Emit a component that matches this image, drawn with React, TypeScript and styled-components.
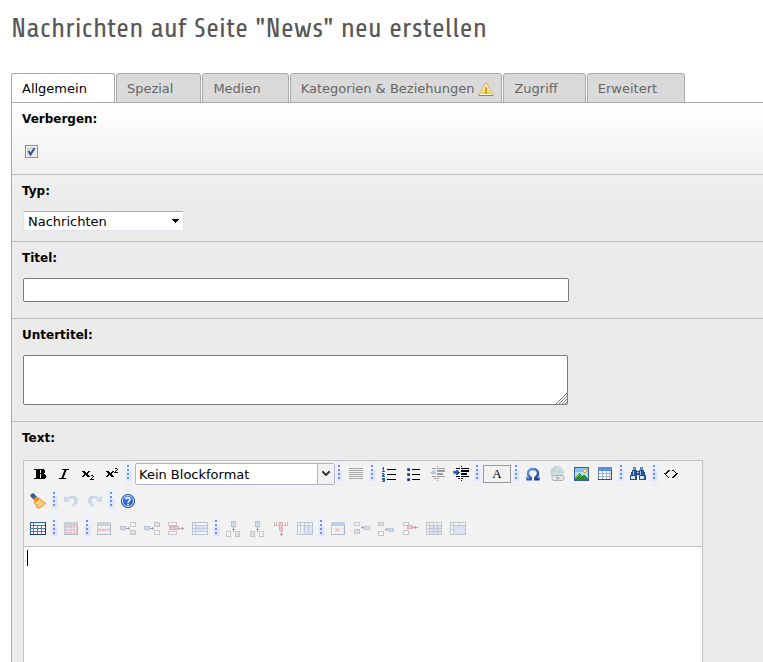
import React from "react";
import styled, { createGlobalStyle, css } from "styled-components";

const GlobalStyle = createGlobalStyle`
  *, *::before, *::after { box-sizing: border-box; }
  body {
    margin: 0;
    background: #fff;
    color: #000;
    font: 13px/16px Verdana, "DejaVu Sans", sans-serif;
  }
`;

/* ---------- page ---------- */

const Page = styled.main`
  display: flex;
  flex-direction: column;
  min-height: 100vh;
  padding: 12px 0 0 11px;
  overflow: hidden;
`;

const Title = styled.h1`
  margin: 0 0 29px;
  color: #585858;
  font: 400 28px/32px Share, "Liberation Sans Narrow", "Roboto Condensed", sans-serif;
  white-space: nowrap;
`;

const TabList = styled.div`
  display: flex;
  gap: 1px;
  margin-bottom: -1px;
`;

const Tab = styled.button<{ $active?: boolean }>`
  display: flex;
  align-items: center;
  gap: 4px;
  height: 30px;
  padding: 2px 7px 0 10px;
  border: 1px solid #a9a9a9;
  border-radius: 3px 3px 0 0;
  background: #dadada;
  color: #666;
  font: inherit;
  white-space: nowrap;
  ${(p) =>
    p.$active &&
    css`
      border-bottom-color: #fff;
      background: #fff;
      color: #000;
    `}
`;

const TabIcon = styled.span`
  display: flex;
  width: 16px;
  height: 16px;
`;

const Panel = styled.div`
  display: flex;
  flex: 1;
  flex-direction: column;
  border-left: 1px solid #a9a9a9;
  background: #ebebeb linear-gradient(#fff, #ebebeb) 0 0 / 100% 100px no-repeat;
`;

const Field = styled.div<{ $grow?: boolean }>`
  display: flex;
  flex-direction: column;
  align-items: flex-start;
  gap: 12px;
  padding: 8px 16px 16px 11px;
  border-top: 1px solid #bcbcbc;
  ${(p) =>
    p.$grow &&
    css`
      flex: 1;
      gap: 14px;
      padding-bottom: 0;
    `}
`;

const SelectField = styled(Field)`
  padding-bottom: 10px;
`;

const CheckField = styled(Field)`
  gap: 18px;
  border-top-color: #a9a9a9;
`;

const Label = styled.label`
  margin-left: -1px;
  font-size: 12px;
  font-weight: 700;
`;

const CheckWrap = styled.span`
  display: grid;
  margin-left: 2px;
  > * {
    grid-area: 1 / 1;
  }
  svg {
    z-index: 1;
    pointer-events: none;
  }
`;

const Checkbox = styled.input`
  appearance: none;
  width: 13px;
  height: 13px;
  margin: 0;
  border: 1px solid #8e8f8f;
  background: linear-gradient(135deg, #cbd0d8, #f6f6f6);
  box-shadow: inset 0 0 0 1px #f4f4f4;
`;

const SelectWrap = styled.span`
  display: grid;
  align-items: center;
  width: 161px;
  > * {
    grid-area: 1 / 1;
  }
  svg {
    justify-self: end;
    margin-right: 4px;
    pointer-events: none;
  }
`;

const Select = styled.select`
  appearance: none;
  width: 100%;
  height: 20px;
  padding: 2px 4px 0;
  border: 1px solid #e2e3ea;
  border-top-color: #abadb3;
  border-radius: 2px;
  background: #fff;
  color: #000;
  font: inherit;
`;

const TextInput = styled.input`
  width: 100%;
  max-width: 546px;
  height: 24px;
  padding: 2px 4px;
  border: 1px solid #7c7c7c;
  border-radius: 2px;
  background: #fff;
  font: inherit;
`;

const AreaWrap = styled.span`
  display: grid;
  width: 100%;
  max-width: 545px;
  > * {
    grid-area: 1 / 1;
  }
  svg {
    place-self: end;
    margin: 1px;
    pointer-events: none;
  }
`;

const TextArea = styled.textarea`
  width: 100%;
  height: 50px;
  padding: 2px 4px;
  border: 1px solid #7c7c7c;
  border-radius: 2px;
  background: #fff;
  font: inherit;
  resize: none;
`;

/* ---------- rich text editor ---------- */

const Editor = styled.div`
  display: flex;
  flex: 1;
  flex-direction: column;
  width: 100%;
  max-width: 680px;
  border: 1px solid #c3c3c3;
  border-bottom: 0;
`;

const Toolbar = styled.div`
  display: flex;
  flex-direction: column;
  padding: 0 2px 3px;
  border-bottom: 1px solid #c3c3c3;
  background: #f2f2f2;
`;

const ToolRow = styled.div<{ $indent?: boolean }>`
  display: flex;
  align-items: center;
  height: ${(p) => (p.$indent ? 26 : 28)}px;
  padding-left: ${(p) => (p.$indent ? 2 : 0)}px;
`;

const Tool = styled.button<{ $off?: boolean }>`
  display: flex;
  flex: none;
  align-items: center;
  justify-content: center;
  width: 24px;
  height: 24px;
  padding: 0;
  border: 0;
  background: none;
  opacity: ${(p) => (p.$off ? 0.35 : 1)};
`;

const ColorTool = styled.button`
  flex: none;
  width: 28px;
  height: 18px;
  margin: 0 1px;
  padding: 0;
  border: 1px solid #9a9a9a;
  background: #f2f2f2;
  color: #000;
  font: 13px/16px "Liberation Serif", serif;
`;

const Separator = styled.span`
  display: flex;
  flex: none;
  justify-content: center;
  width: 9px;
`;

const FormatWrap = styled.span`
  display: grid;
  flex: none;
  width: 200px;
  margin: 0 0 0 2px;
  > * {
    grid-area: 1 / 1;
  }
  svg {
    place-self: center end;
    pointer-events: none;
  }
`;

const FormatSelect = styled.select`
  appearance: none;
  width: 100%;
  height: 22px;
  padding: 1px 3px 0;
  border: 1px solid #b4b4c4;
  border-radius: 2px;
  background: #fff;
  color: #000;
  font: inherit;
`;

const Canvas = styled.div`
  display: grid;
  flex: 1;
  min-height: 115px;
  background: #fff;
  > * {
    grid-area: 1 / 1;
  }
`;

const CanvasText = styled.textarea`
  width: 100%;
  height: 100%;
  padding: 3px 4px;
  border: 0;
  outline: 0;
  background: none;
  font: inherit;
  resize: none;
`;

const Caret = styled.span`
  width: 1px;
  height: 16px;
  margin: 3px;
  background: #000;
  pointer-events: none;
`;

/* ---------- icons ---------- */

const Svg = ({ children, w = 16, h = 16, smooth = false }: { children: React.ReactNode; w?: number; h?: number; smooth?: boolean }) => (
  <svg width={w} height={h} viewBox={`0 0 ${w} ${h}`} fill="none" shapeRendering={smooth ? "auto" : "crispEdges"} aria-hidden="true">
    {children}
  </svg>
);

const Sep = () => (
  <Separator>
    <Svg w={7} h={24}>
      <rect x=".5" y=".5" width="6" height="23" stroke="#ebeefa" />
      <rect x="1" y="1" width="5" height="8" fill="#eef2fd" />
      <rect x="1" y="9" width="5" height="10" fill="#dce5fc" />
      <path d="M2 3h2v2H2zM2 7h2v2H2zM2 11h2v2H2zM2 15h2v2H2z" fill="#6c8fea" />
    </Svg>
  </Separator>
);

const Warning = () => (
  <Svg smooth>
    <defs>
      <linearGradient id="warn" x1="0" y1="0" x2="0" y2="1">
        <stop offset="0" stopColor="#fdf3a0" />
        <stop offset="1" stopColor="#f3c83c" />
      </linearGradient>
    </defs>
    <path d="M8 1.500 15.300 14.400H.7z" fill="#fff" stroke="#e3a53a" strokeLinejoin="round" />
    <path d="M1 14.500h14" stroke="#c9771c" />
    <path d="M8 4 13.300 13H2.700z" fill="url(#warn)" />
    <path d="M7.200 6.200h1.600l-.3 3.800h-1zM7.200 10.800h1.600v1.400H7.200z" fill="#a87b12" />
  </Svg>
);

const Bold = () => (
  <Svg>
    <path d="M2 3h10v1h1v3h-1v1h1v1h1v3h-1v1H2v-1h2V4H2z" fill="#000" />
    <path d="M8 4h1v3H8zM8 8h1v4H8z" fill="#f2f2f2" />
  </Svg>
);
const Italic = () => (
  <Svg smooth>
    <path d="M6 3.500h7M3 12.500h7" stroke="#000" />
    <path d="M9.700 3.500 6.300 12.500" stroke="#000" strokeWidth="2" />
  </Svg>
);
const Sub = () => (
  <Svg>
    <path d="M2 5h3v1h1v1h1V6h1V5h2v1H9v1H8v2h1v1h1v1H7v-1H6V9H5v1H4v1H2v-1h1V9h1V7H3V6H2z" fill="#000" />
    <path d="M11 9h2v1h1v1h-1v1h-1v1h2v1h-4v-1h1v-1h1v-1h1v-1h-2z" fill="#000" />
  </Svg>
);
const Sup = () => (
  <Svg>
    <path d="M2 5h3v1h1v1h1V6h1V5h2v1H9v1H8v2h1v1h1v1H7v-1H6V9H5v1H4v1H2v-1h1V9h1V7H3V6H2z" fill="#000" />
    <path d="M11 2h2v1h1v1h-1v1h-1v1h2v1h-4V6h1V5h1V4h1V3h-2z" fill="#000" />
  </Svg>
);
const Align = () => (
  <Svg>
    <path d="M1 2.500h14M1 4.500h14M1 6.500h14M1 8.500h14M1 10.500h14M1 12.500h14" stroke="#222" />
  </Svg>
);
const Ordered = () => (
  <Svg>
    <path d="M6 3.500h9M6 8.500h9M6 13.500h9" stroke="#000" />
    <path d="M2 1h1v4H2V3H1V2h1zM1 5h3v1H1zM1 7h2v1h1v1H3v1H2v1H1V9h1V8H1zM2 10h2v1H2zM1 12h3v4H1v-1h1v-1H1z" fill="#2f62b5" />
  </Svg>
);
const Unordered = () => (
  <Svg>
    <path d="M7 3.500h8M7 8.500h8M7 13.500h8" stroke="#000" />
    <path d="M2 2h3v3H2zM2 7h3v3H2zM2 12h3v3H2z" fill="#3f73c4" />
    <path d="M3 3h2v2H3zM3 8h2v2H3zM3 13h2v2H3z" fill="#1f3f7c" />
  </Svg>
);
const IndentLines = () => (
  <path d="M8 0h1v1H8zM3 2h4v1H3zM8 2h8v1H8zM8 4h8v2H8zM8 7h6v2H8zM3 10h4v1H3zM8 10h8v1H8zM5 12h2v1H5zM8 12h2v1H8zM8 14h1v1H8z" fill="#000" />
);
const Outdent = () => (
  <Svg>
    <IndentLines />
    <path d="M1 6h2V5h1V4h2v2h1v2H5v1H4V8H2V7H1z" fill="#4a7fce" />
  </Svg>
);
const Indent = () => (
  <Svg>
    <IndentLines />
    <path d="M0 5h3V4h2v1h1v1h1v1H6v1H5v1H3V8H1V7H0z" fill="#2f66c8" />
    <path d="M4 6h2v2H4z" fill="#173a80" />
  </Svg>
);
const Omega = () => (
  <Svg smooth>
    <defs>
      <linearGradient id="om" x1="0" y1="0" x2="1" y2="1">
        <stop offset="0" stopColor="#6ea6f2" />
        <stop offset="1" stopColor="#122f86" />
      </linearGradient>
    </defs>
    <path d="M1.500 13.300h4.300v-1.500C3.900 10.900 3 9.400 3 7.300 3 4.600 5 3 8 3s5 1.600 5 4.300c0 2.100-.9 3.600-2.800 4.500v1.500h4.300" stroke="url(#om)" strokeWidth="2.400" />
    <path d="M2 10.500v3M14 10.500v3" stroke="#2456b4" />
  </Svg>
);
const Globe = () => (
  <Svg smooth>
    <circle cx="8" cy="6.500" r="6.200" fill="#8db5e2" stroke="#6b8fb8" />
    <path d="M4 2c3-1 4 1 3 3L3 8 2 5zM9 3l3 1-1 4-3-1z" fill="#73b36e" />
    <rect x="3" y="9.500" width="7" height="5" rx="2" fill="#ddd" stroke="#333" />
    <rect x="8" y="9.500" width="7" height="5" rx="2" fill="#ddd" stroke="#333" />
    <path d="M6.500 12h5" stroke="#333" />
  </Svg>
);
const Image = () => (
  <Svg>
    <rect x="1.500" y="1.500" width="14" height="13" fill="#b9dcfa" stroke="#3a5f9e" />
    <path d="M2 2h13v4H2z" fill="#8dc1f3" />
    <path d="M2 13v-2l4-4 3 3 2-1 4 3v2H2z" fill="#2b8a27" />
    <path d="M2 11h1v-1h1V9h1V8h2v1h1v1h1v1h-2v-1H5v1H4v1H2z" fill="#5ab14c" />
    <path d="M11 3h2v1h1v2h-1v1h-2V6h-1V4h1z" fill="#e3a81a" />
    <path d="M11 4h2v2h-2z" fill="#fff08a" />
  </Svg>
);
const TableIcon = ({ red = "", head = "#5a8fe6" }: { red?: string; head?: string }) => (
  <Svg>
    <rect x="1.500" y="1.500" width="13" height="12" fill="#fff" stroke="#6883ad" />
    <path d="M1 1h14v4H1z" fill={head} />
    <path d="M1 13.500h14M14.500 4v10" stroke="#2f4d78" />
    {red && <path d={red} fill="#f0606a" />}
    <path d="M2 7.500h12M2 10.500h12M5.500 5v8M9.500 5v8M12.500 5v8" stroke={red ? "#d5cdd6" : "#a3b5cf"} />
  </Svg>
);
const GridTable = () => (
  <Svg>
    <rect x=".5" y="1.500" width="15" height="12" fill="#fff" stroke="#335c96" />
    <path d="M3.500 1v12M7.500 4v10M11.500 4v10M0 4.500h16M0 7.500h16M0 10.500h16" stroke="#4f79b2" />
    <path d="M4 2h11v2H4z" fill="#e9f1fb" />
    <path d="M0 13.500h16M15.500 2v12" stroke="#1d3d6e" />
  </Svg>
);
const Binoculars = () => (
  <Svg>
    <path d="M3 1h3v3H3zM10 1h3v3h-3z" fill="#4c83c4" />
    <path d="M2 4h5v2H2zM9 4h5v2H9zM1 6h6v3H1zM9 6h6v3H9zM7 5h2v4H7zM0 9h7v5H0zM9 9h7v5H9z" fill="#24518f" />
    <path d="M4 2h1v1H4zM11 2h1v1h-1zM3 5h1v4H3zM10 5h1v4h-1zM7 6h2v1H7z" fill="#9fc5ef" />
    <path d="M1 10h4v3H1zM10 10h4v3h-4z" fill="#d6e6f8" />
  </Svg>
);
const Code = () => (
  <Svg>
    <path d="M5 4h2v1H6v1H5v1H4v1H3v1h1v1h1v1h1v1H5v-1H4v-1H3V9H2V8H1V7h2V6h1V5h1zM9 4h2v1h1v1h1v1h2v1h-1v1h-1v1h-1v1h-1v1H9v-1h1v-1h1V9h1V8h1V7h-1V6h-1V5H9z" fill="#000" />
  </Svg>
);
const Broom = () => (
  <Svg smooth>
    <path d="M.5 1.500 3.500 0 7 4 3.500 6.500.5 3.500z" fill="#2d5f9f" />
    <path d="M3 6 7 3.500 10 6 5 9.500z" fill="#f0902a" />
    <path d="M4 9.500 9.500 5.500 15.500 10.500 9.500 15 8 14.500 6.500 14 6.500 12.500z" fill="#fbc46a" stroke="#e08f2c" strokeLinejoin="round" />
    <path d="m6.500 11 4-3M9.500 13l3.500-3" stroke="#fff0b5" />
  </Svg>
);
const Undo = () => (
  <Svg smooth>
    <path d="M1 2.500v6h6L5 6.600C8 4.500 11.500 5 11.500 8c0 2-1.500 3.500-3 4.500l1.500 1.500c3-1.300 5-3.500 5-6.500 0-5-6.500-6.500-11.500-2.500z" fill="#7fa6dc" />
  </Svg>
);
const Redo = () => (
  <Svg smooth>
    <path d="M15 2.500v6H9l2-1.900C8 4.500 4.500 5 4.500 8c0 2 1.500 3.500 3 4.500L6 14C3 12.700 1 10.500 1 7.500 1 2.500 7.500 1 12.500 5z" fill="#7fa6dc" />
  </Svg>
);
const Help = () => (
  <Svg smooth>
    <circle cx="8" cy="8" r="6.600" fill="#2a67d8" stroke="#2858b0" />
    <circle cx="8" cy="8" r="5.500" stroke="#d8e7ff" />
    <path d="M5.900 6.600C5.900 4 10.100 4 10.100 6.500c0 1.500-2.100 1.500-2.100 3.200M8 10.800v1.500" stroke="#fff" strokeWidth="1.600" />
  </Svg>
);

const Cell = ({ x, y, w = 5, h = 4, c = "#fff" }: { x: number; y: number; w?: number; h?: number; c?: string }) => (
  <rect x={x + 0.5} y={y + 0.5} width={w} height={h} fill={c} stroke="#777" />
);
const RowInsert = ({ under = false }: { under?: boolean }) => (
  <Svg>
    <Cell x={10} y={1} c={under ? "#bbb" : "#fff"} />
    <Cell x={10} y={9} c={under ? "#fff" : "#bbb"} />
    <rect x=".5" y="5.500" width="5" height="3" fill="#8fb2ea" stroke="#5577a8" />
    <path d="M6 7.500h4M8.500 6v3" stroke="#222" />
  </Svg>
);
const RowDelete = () => (
  <Svg>
    <Cell x={0} y={1} w={8} h={3} />
    <Cell x={0} y={10} w={8} h={3} />
    <rect x="1.500" y="5.500" width="9" height="3" fill="#ef6d6d" stroke="#b34" />
    <path d="M11 7.500h5M14.500 6v3" stroke="#222" />
  </Svg>
);
const Split = ({ c = "#a9c6f2", cols = false }: { c?: string; cols?: boolean }) => (
  <Svg>
    <rect x=".5" y="1.500" width="15" height="12" fill="#fff" stroke="#4a6ea3" />
    <path d={cols ? "M6 5h9v8H6z" : "M4 5h11v6H4z"} fill={c} />
    <path d={cols ? "M3.500 2v12M7.500 2v12M11.500 2v12M1 4.500h14" : "M3.500 2v12M1 4.500h14M1 7.500h14M1 10.500h14"} stroke="#6586b8" />
  </Svg>
);
const ColInsert = ({ after = false }: { after?: boolean }) => (
  <Svg>
    <rect x="6.500" y=".5" width="4" height="5" fill="#8fb2ea" stroke="#5577a8" />
    <path d="M8.500 6v5M7 8.500h3" stroke="#222" />
    <Cell x={1} y={10} w={4} h={5} c={after ? "#bbb" : "#fff"} />
    <Cell x={10} y={10} w={4} h={5} c={after ? "#fff" : "#bbb"} />
  </Svg>
);
const ColDelete = () => (
  <Svg>
    <path d="M1.500 1v3h4M14.500 1v3h-4M3.500 1v3M12.500 1v3" stroke="#666" />
    <rect x="6.500" y="1.500" width="3" height="8" fill="#ef6d6d" stroke="#b34" />
    <path d="M8.500 10v5M7 13.500h3" stroke="#222" />
  </Svg>
);
const CellInsert = ({ after = false }: { after?: boolean }) => (
  <Svg>
    <Cell x={0} y={1} h={3} c={after ? "#bbb" : "#fff"} />
    <Cell x={0} y={after ? 10 : 8} h={4} c={after ? "#fff" : "#bbb"} />
    <rect x="10.500" y={after ? "7.500" : "5.500"} width="5" height="3" fill="#8fb2ea" stroke="#5577a8" />
    <path d={after ? "M7 8.500h3M8.500 7v3" : "M7 6.500h3M8.500 5v3"} stroke="#222" />
  </Svg>
);
const CellDelete = () => (
  <Svg>
    <Cell x={1} y={1} h={3} />
    <Cell x={1} y={9} h={4} />
    <rect x="5.500" y="4.500" width="5" height="3" fill="#ef6d6d" stroke="#b34" />
    <path d="M11 6.500h5M13.500 5v3" stroke="#222" />
  </Svg>
);
const CellSplit = ({ merged = false }: { merged?: boolean }) => (
  <Svg>
    <rect x=".5" y="1.500" width="15" height="12" fill="#fff" stroke="#777" />
    <path d="M4 5h11v8H4z" fill="#a9c6f2" />
    <path d={merged ? "M3.500 2v12M1 4.500h14M9.500 2v2M1 8.500h2" : "M3.500 2v12M7.500 2v12M11.500 2v12M1 4.500h14M1 7.500h14M1 10.500h14"} stroke="#6b7f9f" />
  </Svg>
);

type Entry = "sep" | { name: string; icon: React.ReactNode; off?: boolean };

const Tools = ({ items }: { items: Entry[] }) => (
  <>
    {items.map((it, i) =>
      it === "sep" ? (
        <Sep key={i} />
      ) : (
        <Tool key={i} type="button" aria-label={it.name} disabled={it.off} $off={it.off}>
          {it.icon}
        </Tool>
      ),
    )}
  </>
);

const inlineTools: Entry[] = [
  { name: "Fett", icon: <Bold /> },
  { name: "Kursiv", icon: <Italic /> },
  { name: "Tiefgestellt", icon: <Sub /> },
  { name: "Hochgestellt", icon: <Sup /> },
  "sep",
];
const blockTools: Entry[] = [
  "sep",
  { name: "Blocksatz", icon: <Align />, off: true },
  "sep",
  { name: "Nummerierte Liste", icon: <Ordered /> },
  { name: "Aufzählung", icon: <Unordered /> },
  { name: "Einzug verkleinern", icon: <Outdent />, off: true },
  { name: "Einzug vergrößern", icon: <Indent /> },
  "sep",
];
const insertTools: Entry[] = [
  "sep",
  { name: "Sonderzeichen", icon: <Omega /> },
  { name: "Link", icon: <Globe />, off: true },
  { name: "Bild", icon: <Image /> },
  { name: "Tabelle", icon: <TableIcon /> },
  "sep",
  { name: "Suchen", icon: <Binoculars /> },
  "sep",
  { name: "Quelltext", icon: <Code /> },
];
const historyTools: Entry[] = [
  { name: "Formatierung entfernen", icon: <Broom /> },
  "sep",
  { name: "Rückgängig", icon: <Undo />, off: true },
  { name: "Wiederholen", icon: <Redo />, off: true },
  "sep",
  { name: "Hilfe", icon: <Help /> },
];
const tableTools: Entry[] = [
  { name: "Rahmen umschalten", icon: <GridTable /> },
  "sep",
  { name: "Tabelleneigenschaften", icon: <TableIcon red="M2 5h12v8H2z" head="#8a8fa5" />, off: true },
  "sep",
  { name: "Zeileneigenschaften", icon: <TableIcon red="M2 8h12v2H2z" head="#8a8fa5" />, off: true },
  { name: "Zeile davor", icon: <RowInsert />, off: true },
  { name: "Zeile danach", icon: <RowInsert under />, off: true },
  { name: "Zeile löschen", icon: <RowDelete />, off: true },
  { name: "Zeile teilen", icon: <Split />, off: true },
  "sep",
  { name: "Spalte davor", icon: <ColInsert />, off: true },
  { name: "Spalte danach", icon: <ColInsert after />, off: true },
  { name: "Spalte löschen", icon: <ColDelete />, off: true },
  { name: "Spalte teilen", icon: <Split cols />, off: true },
  "sep",
  { name: "Zelleneigenschaften", icon: <TableIcon red="M6 8h4v2H6z" />, off: true },
  { name: "Zelle davor", icon: <CellInsert />, off: true },
  { name: "Zelle danach", icon: <CellInsert after />, off: true },
  { name: "Zelle löschen", icon: <CellDelete />, off: true },
  { name: "Zelle teilen", icon: <CellSplit />, off: true },
  { name: "Zellen verbinden", icon: <CellSplit merged />, off: true },
];

const tabs = [
  { name: "Allgemein", active: true },
  { name: "Spezial" },
  { name: "Medien" },
  { name: "Kategorien & Beziehungen", warn: true },
  { name: "Zugriff" },
  { name: "Erweitert" },
];

export default function App() {
  return (
    <>
      <GlobalStyle />
      <Page>
        <Title>Nachrichten auf Seite "News" neu erstellen</Title>
        <TabList role="tablist">
          {tabs.map((t) => (
            <Tab key={t.name} type="button" role="tab" aria-selected={!!t.active} $active={t.active}>
              {t.name}
              <TabIcon>{t.warn && <Warning />}</TabIcon>
            </Tab>
          ))}
        </TabList>
        <Panel role="tabpanel">
          <CheckField>
            <Label htmlFor="hidden">Verbergen:</Label>
            <CheckWrap>
              <Checkbox id="hidden" type="checkbox" defaultChecked />
              <Svg w={13} h={13} smooth>
                <path d="M3.500 6 5.500 9.500 9.500 3" stroke="#3a4f98" strokeWidth="2" />
              </Svg>
            </CheckWrap>
          </CheckField>
          <SelectField>
            <Label htmlFor="type">Typ:</Label>
            <SelectWrap>
              <Select id="type">
                <option>Nachrichten</option>
              </Select>
              <Svg w={9} h={5}>
                <path d="M1 0h7v1H7v1H6v1H5v1H4V3H3V2H2V1H1z" fill="#000" />
              </Svg>
            </SelectWrap>
          </SelectField>
          <Field>
            <Label htmlFor="title">Titel:</Label>
            <TextInput id="title" type="text" />
          </Field>
          <Field>
            <Label htmlFor="subtitle">Untertitel:</Label>
            <AreaWrap>
              <TextArea id="subtitle" />
              <Svg w={11} h={11} smooth>
                <path d="M0 11 11 0M3 11l8-8M6 11l5-5M9 11l2-2" stroke="#777" />
              </Svg>
            </AreaWrap>
          </Field>
          <Field $grow>
            <Label htmlFor="text">Text:</Label>
            <Editor>
              <Toolbar role="toolbar">
                <ToolRow $indent>
                  <Tools items={inlineTools} />
                  <FormatWrap>
                    <FormatSelect aria-label="Blockformat">
                      <option>Kein Blockformat</option>
                    </FormatSelect>
                    <Svg w={18} h={22}>
                      <path d="M1 1h16v20H1z" fill="#f2f2f2" />
                      <path d="M.5 0v22" stroke="#b4b4c4" />
                      <path d="M5 8h2v1h1v1h2V9h1V8h2v2h-1v1h-1v1h-1v1H8v-1H7v-1H6v-1H5z" fill="#444" />
                    </Svg>
                  </FormatWrap>
                  <Tools items={blockTools} />
                  <ColorTool type="button" aria-label="Textfarbe">A</ColorTool>
                  <Tools items={insertTools} />
                </ToolRow>
                <ToolRow>
                  <Tools items={historyTools} />
                </ToolRow>
                <ToolRow>
                  <Tools items={tableTools} />
                </ToolRow>
              </Toolbar>
              <Canvas>
                <CanvasText id="text" />
                <Caret />
              </Canvas>
            </Editor>
          </Field>
        </Panel>
      </Page>
    </>
  );
}
